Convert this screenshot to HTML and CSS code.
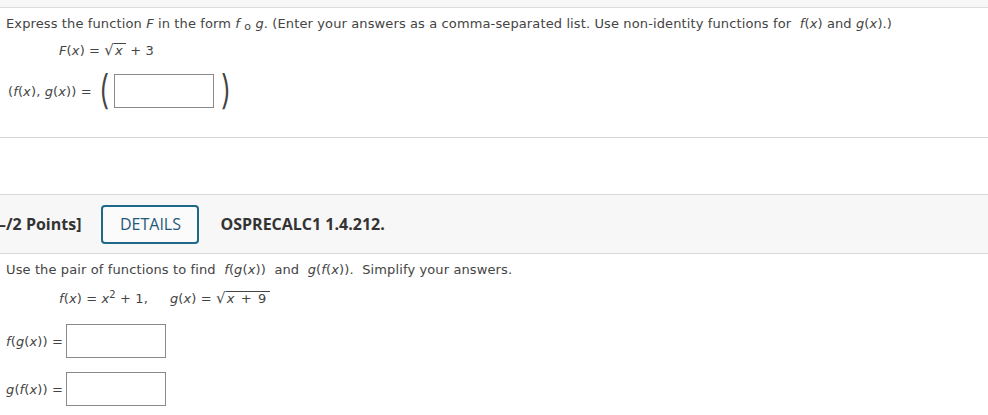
FILE: index.html
```html
<!DOCTYPE html>
<html>
<head>
<meta charset="utf-8">
<link rel="stylesheet" href="styles.css">
</head>
<body>
<div class="topband"></div>
<section class="q">
  <p class="prompt">Express the function <i>F</i> in the form <i>f</i> <span class="comp">o</span> <i>g</i>. (Enter your answers as a comma-separated list. Use non-identity functions for&nbsp; <i>f</i>(<i>x</i>) and <i>g</i>(<i>x</i>).)</p>
  <p class="formula"><i>F</i>(<i>x</i>) = <span class="sqrt"><span class="rad">√</span><span class="under"><i>x</i></span></span> + 3</p>
  <div class="answer">
    <span class="lbl">(<i>f</i>(<i>x</i>), <i>g</i>(<i>x</i>)) =</span>
    <span class="paren">(</span>
    <span class="box wide"></span>
    <span class="paren">)</span>
  </div>
</section>
<div class="spacer"></div>
<div class="header">
  <span class="points">–/2 Points]</span>
  <span class="details">DETAILS</span>
  <span class="code">OSPRECALC1 1.4.212.</span>
</div>
<section class="q2">
  <p class="prompt">Use the pair of functions to find&nbsp; <i>f</i>(<i>g</i>(<i>x</i>))&nbsp; and&nbsp; <i>g</i>(<i>f</i>(<i>x</i>)).&nbsp; Simplify your answers.</p>
  <p class="formula"><i>f</i>(<i>x</i>) = <i>x</i><sup>2</sup> + 1,<span class="gap"></span><i>g</i>(<i>x</i>) = <span class="sqrt"><span class="rad">√</span><span class="under"><i>x</i> + 9</span></span></p>
  <div class="row"><span class="lbl2"><i>f</i>(<i>g</i>(<i>x</i>)) =</span><span class="box"></span></div>
  <div class="row"><span class="lbl2"><i>g</i>(<i>f</i>(<i>x</i>)) =</span><span class="box"></span></div>
</section>
</body>
</html>
```
FILE: styles.css
```css
html, body { margin: 0; padding: 0; background: #fff; }
body { font-family: "DejaVu Sans", Verdana, sans-serif; font-size: 13px; letter-spacing: 0.12px; color: #444; width: 988px; height: 415px; overflow: hidden; }
p { margin: 0; }
.topband { height: 7px; background: #f7f7f7; border-bottom: 1px solid #dcdcdc; }
.q { height: 129px; border-bottom: 1px solid #d4d4d4; }
.q .prompt { padding: 8px 0 0 6px; line-height: 16px; white-space: nowrap; }
.comp { font-size: 11px; vertical-align: -2px; }
.formula { padding: 7px 0 0 59px; line-height: 16px; white-space: nowrap; }
.sqrt { display: inline-flex; align-items: flex-end; }
.rad { font-size: 15px; line-height: 16px; }
.under { border-top: 1px solid #444; padding: 0 3px 0 1px; line-height: 14px; margin-top: 1px; word-spacing: 2px; }
sup { font-size: 10px; line-height: 0; }
.gap { display: inline-block; width: 22px; }
.answer { display: flex; align-items: center; margin-top: 14px; padding-left: 8px; height: 36px; }
.lbl { margin-right: 5px; }
.paren { font-size: 40px; font-weight: 300; color: #444; line-height: 36px; font-family: Inter, "Liberation Sans", sans-serif; transform: scaleX(0.8); display: inline-block; margin-top: -2px; }
.box { display: inline-block; width: 98px; height: 32px; border: 1px solid #8a8a8a; background: #fff; }
.wide { margin: 0 5px 0 3px; }
.spacer { height: 56px; border-bottom: 1px solid #d8d8d8; }
.header { height: 58px; background: #f7f7f7; border-bottom: 1px solid #d8d8d8; display: flex; align-items: center; font-family: "Open Sans", sans-serif; font-size: 16px; letter-spacing: 0; color: #333; }
.points { font-weight: 700; margin-left: -2px; }
.details { margin-left: 20px; width: 94px; height: 35px; border: 2px solid #1e6889; border-radius: 4px; display: flex; align-items: center; justify-content: center; color: #24587a; background: #fbfbfb; }
.code { font-weight: 700; margin-left: 21px; }
.q2 .prompt { padding: 8px 0 0 6px; line-height: 16px; white-space: nowrap; }
.q2 .formula { padding-top: 12px; }
.row { display: flex; align-items: center; padding-left: 6px; }
.row:first-of-type { margin-top: 17px; }
.row + .row { margin-top: 14px; }
.lbl2 { margin-right: 3px; }
```
